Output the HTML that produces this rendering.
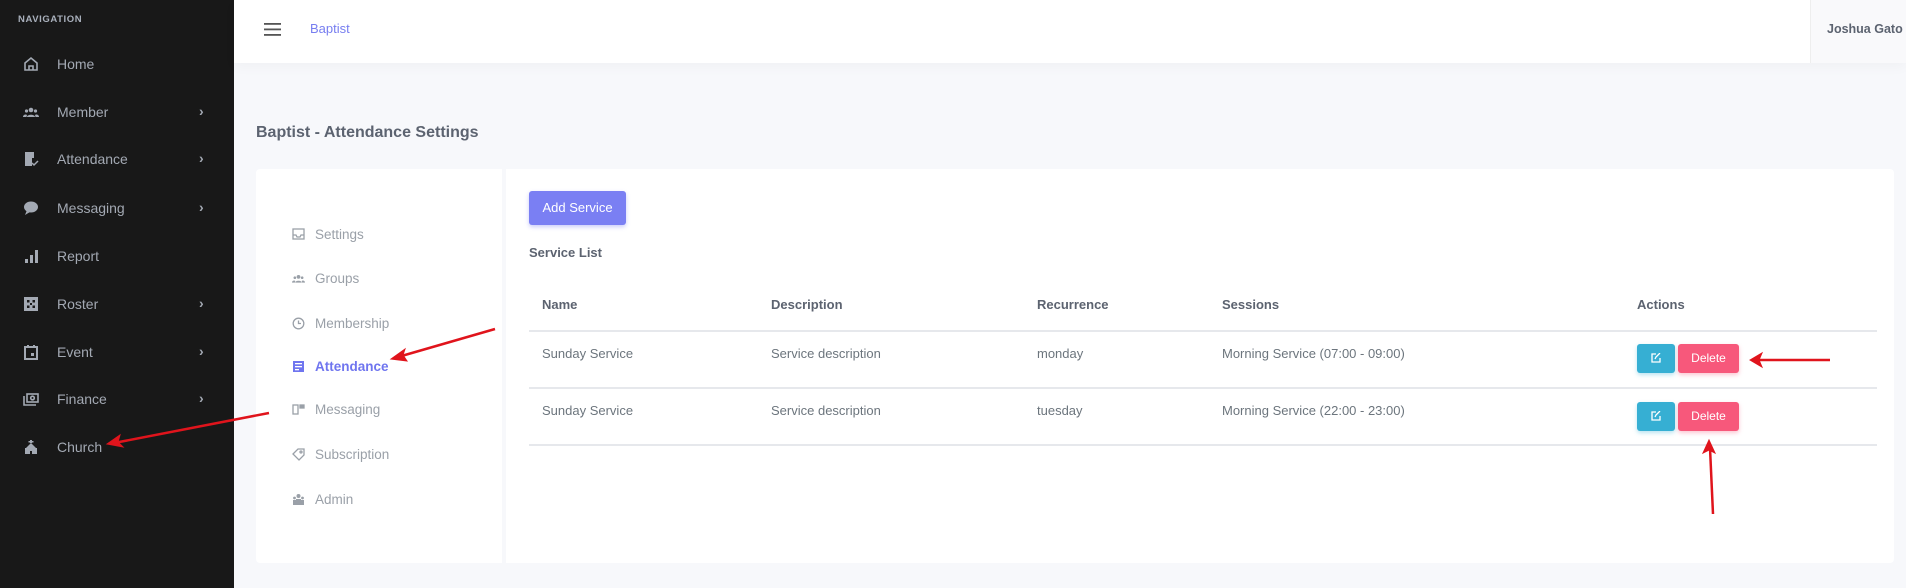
<!DOCTYPE html>
<html><head><meta charset="utf-8"><style>
*{box-sizing:border-box;margin:0;padding:0}
body{width:1906px;height:588px;overflow:hidden;background:#f7f8fb;font-family:"Liberation Sans",sans-serif;position:relative;color:#6c757d}
.side{position:absolute;left:0;top:0;width:234px;height:588px;background:#181818}
.nav-t{position:absolute;left:18px;top:14px;font-size:9.5px;color:#a9b0bc;letter-spacing:.6px;font-weight:bold}
.ni{position:absolute;left:0;width:234px;height:24px;font-size:14px;color:#a3a9b3}
.ni .ic{position:absolute;left:23px;top:4px;width:16px;height:16px}
.ni span{position:absolute;left:57px;top:4px}
.ni .ch{position:absolute;left:199px;top:3px;font-size:14px;color:#a3a9b3}
.hdr{position:absolute;left:234px;top:0;right:0;height:63px;background:#fff;box-shadow:0 4px 12px rgba(0,0,0,.03)}
.user{position:absolute;right:0;top:0;width:96px;height:63px;background:#f9f9fb;border-left:1px solid #eee;font-size:12.5px;font-weight:bold;color:#5c6370;padding:22px 0 0 16px}
.title{position:absolute;left:256px;top:124px;font-size:16px;font-weight:bold;color:#5c6370}
.card{position:absolute;left:256px;top:169px;width:1638px;height:394px;background:#fff;border-radius:4px}
.lp{position:absolute;left:0;top:0;width:250px;height:394px;border-right:4px solid #f7f8fb}
.li{position:absolute;left:36px;font-size:13.5px;color:#9aa0a8}
.li .ic{position:absolute;left:0;top:1px;width:13px;height:13px}
.li span{position:absolute;left:23px;top:0;white-space:nowrap}
.btn{position:absolute;left:529px;top:191px;width:97px;height:34px;background:#7a7ff3;color:#fff;font-size:13px;border-radius:3px;text-align:center;line-height:34px;box-shadow:0 2px 4px rgba(122,127,243,.4)}
.sl{position:absolute;left:529px;top:245px;font-size:13px;font-weight:bold;color:#5c6370}
.t{position:absolute;font-size:13px;color:#6c757d;white-space:nowrap}
.th{font-weight:bold;color:#5c6370}
.hl{position:absolute;left:529px;width:1348px;height:2px;background:#e6e8ec}
.eb{position:absolute;width:38px;height:29px;background:#36afd3;border-radius:3px;box-shadow:0 2px 4px rgba(54,175,211,.35)}
.db{position:absolute;width:61px;height:29px;background:#f7587b;border-radius:3px;color:#fff;font-size:12px;text-align:center;line-height:29px;box-shadow:0 2px 4px rgba(247,88,123,.35)}
</style></head><body>
<div class="side">
<div class="nav-t">NAVIGATION</div>
<div class="ni" style="top:52px"><svg class="ic" viewBox="0 0 16 16" fill="none" stroke="#a3a9b3" stroke-width="1.6"><path d="M2 7L8 2l6 5v7H2z"/><path d="M6 14V10h4v4"/></svg><span>Home</span></div>
<div class="ni" style="top:100px"><svg class="ic" viewBox="0 0 16 16" fill="#a3a9b3"><circle cx="8" cy="6" r="2.3"/><circle cx="3.5" cy="7" r="1.6"/><circle cx="12.5" cy="7" r="1.6"/><path d="M4 13c0-3 8-3 8 0zM0 13c0-2.5 3-3 4-2l-.5 2zM16 13c0-2.5-3-3-4-2l.5 2z"/></svg><span>Member</span><b class="ch">›</b></div>
<div class="ni" style="top:147px"><svg class="ic" viewBox="0 0 16 16" fill="#a3a9b3"><path d="M2 1h9v6h-2v8H2z"/><path d="M9 12l2 2 4-4" stroke="#a3a9b3" fill="none" stroke-width="1.5"/></svg><span>Attendance</span><b class="ch">›</b></div>
<div class="ni" style="top:196px"><svg class="ic" viewBox="0 0 16 16" fill="#a3a9b3"><ellipse cx="8" cy="7" rx="7" ry="5.5"/><path d="M2 15l2-5 3 2z"/></svg><span>Messaging</span><b class="ch">›</b></div>
<div class="ni" style="top:244px"><svg class="ic" viewBox="0 0 16 16" fill="#a3a9b3"><rect x="2" y="11" width="3" height="4"/><rect x="7" y="7" width="3" height="8"/><rect x="12" y="2" width="3" height="13"/></svg><span>Report</span></div>
<div class="ni" style="top:292px"><svg class="ic" viewBox="0 0 16 16" fill="#a3a9b3"><rect x="1" y="1" width="14" height="14"/><g fill="#181818"><rect x="4" y="4" width="2.5" height="2.5"/><rect x="9.5" y="4" width="2.5" height="2.5"/><rect x="7" y="7" width="2" height="2"/><rect x="4" y="9.5" width="2.5" height="2.5"/><rect x="9.5" y="9.5" width="2.5" height="2.5"/></g></svg><span>Roster</span><b class="ch">›</b></div>
<div class="ni" style="top:340px"><svg class="ic" viewBox="0 0 16 16" fill="none" stroke="#a3a9b3" stroke-width="2"><rect x="2" y="3" width="12" height="12"/><path d="M5 1v3M11 1v3"/><rect x="8" y="9" width="3" height="3" fill="#a3a9b3" stroke="none"/></svg><span>Event</span><b class="ch">›</b></div>
<div class="ni" style="top:387px"><svg class="ic" viewBox="0 0 16 16" fill="none" stroke="#a3a9b3" stroke-width="1.6"><rect x="4" y="3" width="11" height="8"/><circle cx="9.5" cy="7" r="1.8"/><path d="M1 5v9h12"/></svg><span>Finance</span><b class="ch">›</b></div>
<div class="ni" style="top:435px"><svg class="ic" viewBox="0 0 16 16" fill="#a3a9b3"><path d="M7 1h2v3H7zM5.5 2h5v1.5h-5z"/><path d="M8 4l5 5H3z"/><path d="M2 9h12v6H9v-3H7v3H2z"/></svg><span>Church</span></div>
</div>
<div class="hdr">
<svg style="position:absolute;left:30px;top:23px" width="17" height="13" viewBox="0 0 17 13" fill="#555"><rect y="0" width="17" height="1.8"/><rect y="5.5" width="17" height="1.8"/><rect y="11" width="17" height="1.8"/></svg>
<div style="position:absolute;left:76px;top:21px;font-size:13px;color:#777ef0">Baptist</div>
<div class="user">Joshua Gato</div>
</div>
<div class="title">Baptist - Attendance Settings</div>
<div class="card">
<div class="lp">
<div class="li" style="top:58px"><svg class="ic" viewBox="0 0 13 13" fill="none" stroke="#9aa0a8" stroke-width="1.3"><rect x="1" y="1" width="11" height="10"/><path d="M1 7h3l1 2h3l1-2h3"/></svg><span>Settings</span></div>
<div class="li" style="top:102px"><svg class="ic" viewBox="0 0 16 16" fill="#9aa0a8"><circle cx="8" cy="6" r="2.3"/><circle cx="3.5" cy="7" r="1.6"/><circle cx="12.5" cy="7" r="1.6"/><path d="M4 13c0-3 8-3 8 0zM0 13c0-2.5 3-3 4-2l-.5 2zM16 13c0-2.5-3-3-4-2l.5 2z"/></svg><span>Groups</span></div>
<div class="li" style="top:147px"><svg class="ic" viewBox="0 0 13 13" fill="none" stroke="#9aa0a8" stroke-width="1.3"><circle cx="6.5" cy="6.5" r="5.3"/><path d="M6.5 3.5v3h2.5"/></svg><span>Membership</span></div>
<div class="li" style="top:190px;color:#6f75ef;font-weight:bold"><svg class="ic" viewBox="0 0 13 13" fill="#6f75ef"><rect x="1" y="1" width="11" height="11"/><g fill="#fff"><rect x="3" y="3" width="7" height="1.3"/><rect x="3" y="6" width="7" height="1.3"/><rect x="3" y="9" width="4" height="1.3"/></g></svg><span>Attendance</span></div>
<div class="li" style="top:233px"><svg class="ic" viewBox="0 0 13 13" fill="none" stroke="#9aa0a8" stroke-width="1.3"><rect x="1" y="2" width="5" height="9"/><rect x="8" y="2" width="4" height="3" fill="#9aa0a8"/></svg><span>Messaging</span></div>
<div class="li" style="top:278px"><svg class="ic" viewBox="0 0 13 13" fill="none" stroke="#9aa0a8" stroke-width="1.3"><path d="M1 6l5-5h6v6l-5 5z"/><circle cx="9" cy="4" r="1"/></svg><span>Subscription</span></div>
<div class="li" style="top:323px"><svg class="ic" viewBox="0 0 13 13" fill="#9aa0a8"><circle cx="6.5" cy="3" r="2"/><circle cx="2.5" cy="5" r="1.4"/><circle cx="10.5" cy="5" r="1.4"/><rect x="4" y="6" width="5" height="6"/><rect x="1" y="7" width="3" height="5"/><rect x="9" y="7" width="3" height="5"/></svg><span>Admin</span></div>
</div>
</div>
<div class="btn">Add Service</div>
<div class="sl">Service List</div>
<div class="t th" style="left:542px;top:297px">Name</div>
<div class="t th" style="left:771px;top:297px">Description</div>
<div class="t th" style="left:1037px;top:297px">Recurrence</div>
<div class="t th" style="left:1222px;top:297px">Sessions</div>
<div class="t th" style="left:1637px;top:297px">Actions</div>
<div class="hl" style="top:330px"></div>
<div class="t" style="left:542px;top:346px">Sunday Service</div>
<div class="t" style="left:771px;top:346px">Service description</div>
<div class="t" style="left:1037px;top:346px">monday</div>
<div class="t" style="left:1222px;top:346px">Morning Service (07:00 - 09:00)</div>
<div class="eb" style="left:1637px;top:344px"><svg style="position:absolute;left:14px;top:9px" width="10" height="10" viewBox="0 0 10 10" fill="none" stroke="#fff" stroke-width="1.3"><path d="M5 1H1v8h8V5"/><path d="M4 6l1-2 4-4"/></svg></div>
<div class="db" style="left:1678px;top:344px">Delete</div>
<div class="hl" style="top:387px"></div>
<div class="t" style="left:542px;top:403px">Sunday Service</div>
<div class="t" style="left:771px;top:403px">Service description</div>
<div class="t" style="left:1037px;top:403px">tuesday</div>
<div class="t" style="left:1222px;top:403px">Morning Service (22:00 - 23:00)</div>
<div class="eb" style="left:1637px;top:402px"><svg style="position:absolute;left:14px;top:9px" width="10" height="10" viewBox="0 0 10 10" fill="none" stroke="#fff" stroke-width="1.3"><path d="M5 1H1v8h8V5"/><path d="M4 6l1-2 4-4"/></svg></div>
<div class="db" style="left:1678px;top:402px">Delete</div>
<div class="hl" style="top:444px"></div>
<svg style="position:absolute;left:0;top:0" width="1906" height="588">
<g stroke="#e0141c" stroke-width="2.5" fill="#e0141c">
<line x1="495" y1="329" x2="398" y2="357"/><path d="M391 359l14-10-2 6 4 6z" stroke-width="1"/>
<line x1="269" y1="413" x2="114" y2="443"/><path d="M107 444l13-9-2 7 5 5z" stroke-width="1"/>
<line x1="1830" y1="360" x2="1757" y2="360"/><path d="M1750 360l12-7-3 7 3 7z" stroke-width="1"/>
<line x1="1713" y1="514" x2="1710" y2="448"/><path d="M1709 440l-6 13 6-3 6 3z" stroke-width="1"/>
</g></svg>
</body></html>
